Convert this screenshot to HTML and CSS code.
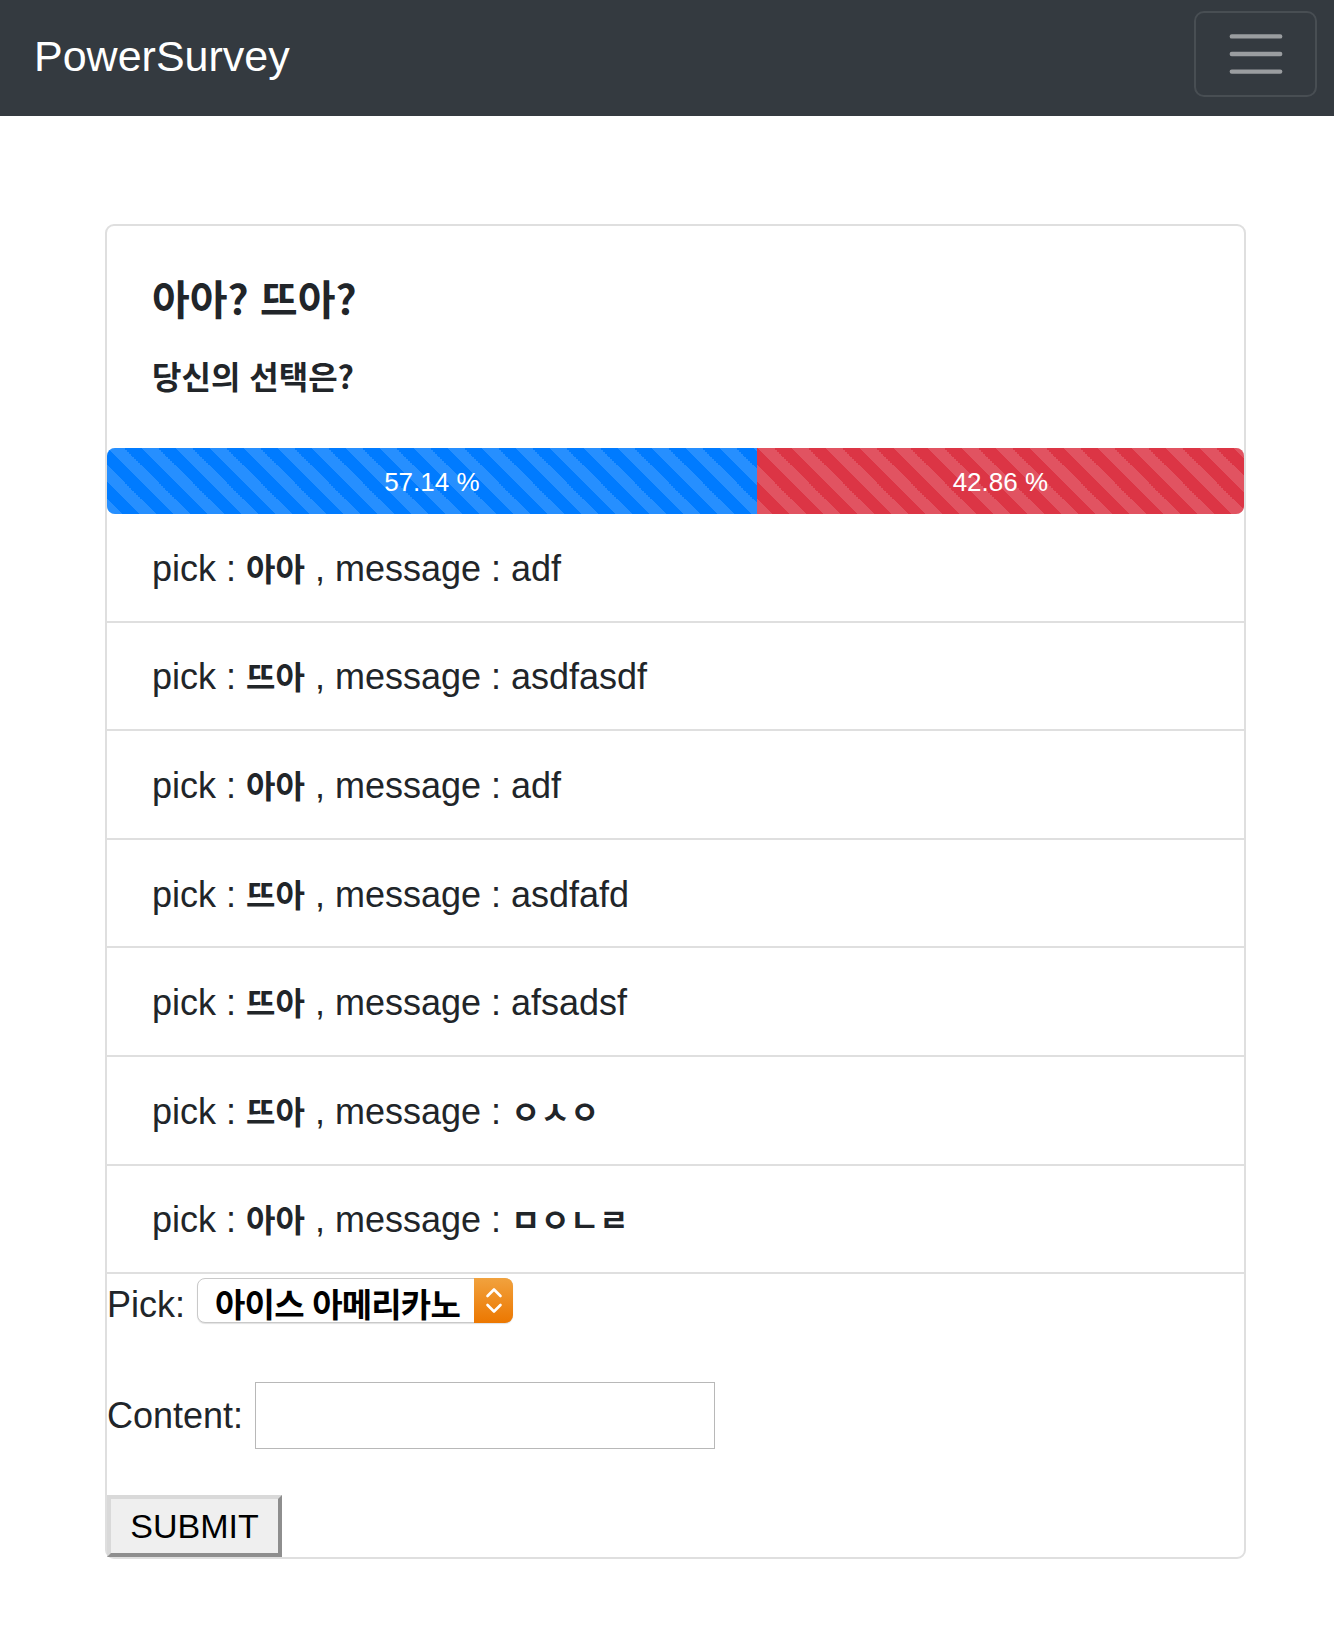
FILE: index.html
```html
<!DOCTYPE html>
<html lang="ko">
<head>
<meta charset="utf-8">
<title>PowerSurvey</title>
<link rel="stylesheet" href="styles.css">
</head>
<body>
<nav class="navbar">
  <a class="navbar-brand" href="#">PowerSurvey</a>
  <button class="navbar-toggler" type="button" aria-label="Toggle navigation">
    <svg class="toggler-icon" width="66" height="66" viewBox="0 0 30 30" aria-hidden="true">
      <path d="M4 7h22M4 15h22M4 23h22" stroke="rgba(255,255,255,0.5)" stroke-width="2" stroke-linecap="round" fill="none"/>
    </svg>
  </button>
</nav>
<main class="page">
  <div class="card">
    <div class="card-body">
      <h5 class="card-title">아아? 뜨아?</h5>
      <h6 class="card-subtitle">당신의 선택은?</h6>
    </div>
    <div class="progress">
      <div class="progress-bar bar-blue" style="width:57.14%">57.14 %</div>
      <div class="progress-bar bar-red" style="width:42.86%">42.86 %</div>
    </div>
    <ul class="list-group">
      <li class="list-item">pick : <b class="ko">아아</b> , message : adf</li>
      <li class="list-item">pick : <b class="ko">뜨아</b> , message : asdfasdf</li>
      <li class="list-item">pick : <b class="ko">아아</b> , message : adf</li>
      <li class="list-item">pick : <b class="ko">뜨아</b> , message : asdfafd</li>
      <li class="list-item">pick : <b class="ko">뜨아</b> , message : afsadsf</li>
      <li class="list-item">pick : <b class="ko">뜨아</b> , message : <span class="ko">ㅇㅅㅇ</span></li>
      <li class="list-item">pick : <b class="ko">아아</b> , message : <span class="ko">ㅁㅇㄴㄹ</span></li>
    </ul>
    <form class="vote-form">
      <div class="form-row pick-row">
        <label class="form-label pick-label" for="pick">Pick:</label>
        <div class="select-wrap">
          <select id="pick" class="select">
            <option>아이스 아메리카노</option>
            <option>뜨거운 아메리카노</option>
          </select>
          <span class="select-arrow" aria-hidden="true">
            <svg width="39" height="45" viewBox="0 0 39 45">
              <path d="M13.5 18l6.5-6.5 6.5 6.5M13.5 27l6.5 6.5 6.5-6.5" stroke="#fff" stroke-width="2.6" stroke-linecap="round" stroke-linejoin="round" fill="none"/>
            </svg>
          </span>
        </div>
      </div>
      <div class="form-row content-row">
        <label class="form-label" for="content">Content:</label>
        <input id="content" class="text-input" type="text">
      </div>
      <button class="submit" type="submit">SUBMIT</button>
    </form>
  </div>
</main>
</body>
</html>
```

FILE: styles.css
```css
html, body {
  margin: 0;
  padding: 0;
}

body {
  font-family: "Liberation Sans", "Noto Sans CJK KR", sans-serif;
  color: #212529;
  background: #fff;
}

/* Navbar */
.navbar {
  height: 116px;
  background: #343a40;
  display: flex;
  align-items: flex-start;
  justify-content: space-between;
  padding: 0 17px 0 34px;
  box-sizing: border-box;
}

.navbar-brand {
  margin-top: 32px;
  color: #fff;
  font-size: 43px;
  line-height: 48px;
  text-decoration: none;
}

.navbar-toggler {
  margin-top: 11px;
  width: 123px;
  height: 86px;
  padding: 0;
  background: transparent;
  border: 2px solid rgba(255, 255, 255, 0.1);
  border-radius: 10px;
  display: flex;
  align-items: center;
  justify-content: center;
}

.toggler-icon {
  display: block;
}

/* Card */
.page {
  padding-top: 108px;
}

.card {
  margin-left: 105px;
  width: 1141px;
  box-sizing: border-box;
  border: 2px solid #dfdfdf;
  border-radius: 9px;
  background: #fff;
}

.card-body {
  padding: 47px 45px 0;
}

.card-title {
  margin: 0;
  font-family: "Noto Sans CJK KR", sans-serif;
  font-size: 41px;
  font-weight: 700;
  line-height: 48px;
  letter-spacing: 0;
}

.card-subtitle {
  margin: 35px 0 0;
  font-family: "Noto Sans CJK KR", sans-serif;
  font-size: 32px;
  font-weight: 700;
  line-height: 38px;
  padding-bottom: 54px;
}

/* Progress */
.progress {
  display: flex;
  height: 66px;
  border-radius: 8px;
  overflow: hidden;
  background: #e9ecef;
}

.progress-bar {
  display: flex;
  align-items: center;
  justify-content: center;
  padding-top: 3px;
  box-sizing: border-box;
  color: #fff;
  font-size: 26px;
  white-space: nowrap;
  background-image: linear-gradient(45deg,
    rgba(255, 255, 255, 0.15) 25%, transparent 25%,
    transparent 50%, rgba(255, 255, 255, 0.15) 50%,
    rgba(255, 255, 255, 0.15) 75%, transparent 75%, transparent);
  background-size: 34px 34px;
}

.bar-blue {
  background-color: #007bff;
}

.bar-red {
  background-color: #dc3545;
}

/* List */
.list-group {
  list-style: none;
  margin: 0;
  padding: 0;
}

.list-item {
  height: 108.6px;
  box-sizing: border-box;
  padding: 28.8px 45px 0;
  font-size: 36px;
  line-height: 52px;
  border-bottom: 2px solid #dfdfdf;
  overflow: hidden;
}

.ko {
  font-family: "Noto Sans CJK KR", sans-serif;
  font-size: 32px;
  font-weight: 700;
  line-height: 1;
}

/* Form */
.vote-form {
  display: flex;
  flex-direction: column;
  align-items: flex-start;
}

.form-row {
  display: flex;
  align-items: center;
  gap: 12px;
}

.pick-row {
  margin-top: 4px;
}

.content-row {
  margin-top: 59px;
}

.form-label {
  font-size: 36px;
  color: #212529;
}

.pick-label {
  position: relative;
  top: 4px;
}

.select-wrap {
  position: relative;
  width: 316px;
  height: 45px;
}

.select {
  appearance: none;
  -webkit-appearance: none;
  width: 100%;
  height: 100%;
  margin: 0;
  box-sizing: border-box;
  padding: 0 39px 0 17px;
  border: 1px solid #c9c9c9;
  border-radius: 8px;
  background: #fff;
  box-shadow: 0 1px 1px rgba(0, 0, 0, 0.12);
  font-family: "Noto Sans CJK KR", sans-serif;
  font-size: 33px;
  font-weight: 700;
  color: #000;
  letter-spacing: -0.8px;
}

.select-arrow {
  position: absolute;
  top: 0;
  right: 0;
  width: 39px;
  height: 45px;
  border-radius: 0 8px 8px 0;
  background: linear-gradient(#f1a23e, #ec7700);
  display: flex;
  pointer-events: none;
}

.text-input {
  width: 460px;
  height: 67px;
  margin: 0;
  padding: 0 8px;
  box-sizing: border-box;
  border: 1px solid #b8b8b8;
  background: #fff;
  font-size: 34px;
}

.submit {
  margin-top: 46px;
  width: 175px;
  height: 62px;
  padding: 0;
  box-sizing: border-box;
  background: #efefef;
  border-style: solid;
  border-width: 4px;
  border-color: #d9d9d9 #8e8e8e #8e8e8e #d9d9d9;
  font-family: "Liberation Sans", sans-serif;
  font-size: 34px;
  color: #000;
}
```
